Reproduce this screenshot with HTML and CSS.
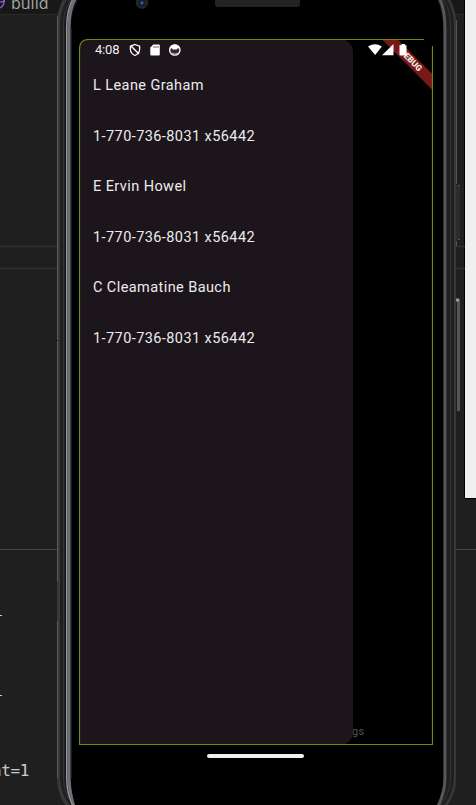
FILE: index.html
```html
<!DOCTYPE html>
<html lang="en">
<head>
<meta charset="utf-8">
<title>Emulator</title>
<link rel="stylesheet" href="styles.css">
</head>
<body>
<div class="desktop">
  <div class="tabbar"></div>
  <span class="tab-label">build</span>
  <span class="dash dash-a"></span>
  <span class="dash dash-b"></span>
  <span class="code">nt=1</span>
  <div class="side-window"></div>
  <svg class="device" width="476" height="805" viewBox="0 0 476 805">
    <path d="M0 246.5H58M0 268.5H58M455 246.5H465M455 268.5H465" stroke="#303030" stroke-width="1.5"/>
    <path d="M0 549.5H58M455 549.5H476" stroke="#464646"/>
    <path d="M0 1.5Q2 3 4.5 0M0 8Q4 6 4.5 0" fill="none" stroke="#8b63c4" stroke-width="1.3"/>
    <rect x="57" y="-22" width="399" height="845" rx="44" fill="#393939"/>
    <rect x="60" y="-20" width="394" height="841" rx="43" fill="#202020"/>
    <rect x="63.5" y="-19" width="387" height="839" rx="42" fill="none" stroke="#343434"/>
    <rect x="65" y="-18" width="382" height="837" rx="42" fill="#151515"/>
    <path d="M82 -12C71 -2 66.7 10 66.7 28V778C66.7 790 69 799 75 810" fill="none" stroke="#94979b" stroke-width="1.5"/>
    <path d="M84 -12C73 -2 69 10 69 28V778C69 790 71.500 799 77.500 810" fill="none" stroke="#6c7077" stroke-width="3.2"/>
    <path d="M433 -12C440 -4 445 9 445 28V778C445 790 442 799 436 810" fill="none" stroke="#56575c" stroke-width="3"/>
    <path d="M75 805Q71 792 71 778V28Q71 12 78 0H437Q443 12 443 28V778Q443 791 437 805Z" fill="#000"/>
    <path d="M71 28V778" stroke="#30373c"/>
    <path d="M57.5 16V581M57.5 621V778" stroke="#5b5b5b"/>
    <path d="M57 340.5H58" stroke="#111"/>
    <path d="M456.5 20V184M456.500 241V246" stroke="#555"/>
    <rect x="456" y="185" width="4" height="55" fill="#2c2c2c"/>
    <path d="M458 185.5H460M458 239.5H460" stroke="#575757"/>
    <rect x="457" y="299" width="3" height="112" fill="#555"/>
    <rect x="456" y="298.5" width="3" height="3" fill="#999"/>
    <circle cx="142" cy="2.7" r="6.2" fill="#252529"/><circle cx="142" cy="3" r="3.9" fill="#171d35"/><circle cx="142" cy="3" r="1.4" fill="#4a5c99"/>
    <rect x="215" y="-8" width="85" height="15" rx="3" fill="#222423"/>
  </svg>
  <main class="screen">
    <span class="settings">gs</span>
    <section class="drawer">
      <header class="status">
        <span class="clock">4:08</span>
        <svg class="status-icons" width="54" height="14" viewBox="0 0 54 14">
          <path d="M6 1.500L10.600 3.200V6.500Q10.400 10.500 6 12.500Q1.600 10.500 1.400 6.500V3.200Z" fill="none" stroke="#fff" stroke-width="1.3"/>
          <path d="M2 3L10 11" stroke="#fff" stroke-width="1.4"/><path d="M6 4L9 5.500V7.500" fill="none" stroke="#1c151c"/>
          <path d="M21.300 4.500L24.300 1.500H29.800Q30.800 1.500 30.800 2.500V11.500Q30.800 12.500 29.800 12.500H22.300Q21.300 12.500 21.300 11.500Z" fill="#fff"/>
          <path d="M25 3V5M27 3V5M29 3V5" stroke="#4b444b" stroke-width=".8"/>
          <circle cx="45.800" cy="7" r="5.2" fill="#302a30" stroke="#fff" stroke-width="1.3"/>
          <path d="M40.800 6.500A5 5 0 0 1 50.800 6.500L48.800 5 47.800 6.500H43.800L42.800 5Z" fill="#fff"/>
          <path d="M43 10Q45.800 12 48.600 10" fill="none" stroke="#aaa"/>
        </svg>
      </header>
      <ul class="contacts">
        <li>L Leane Graham</li>
        <li>1-770-736-8031 x56442</li>
        <li>E Ervin Howel</li>
        <li>1-770-736-8031 x56442</li>
        <li>C Cleamatine Bauch</li>
        <li>1-770-736-8031 x56442</li>
      </ul>
    </section>
    <div class="ribbon">DEBUG</div>
    <svg class="radio" width="42" height="14" viewBox="0 0 42 14">
      <path d="M0 3.500Q7 -1 13.800 3.500L7.200 12Z" fill="#fff"/>
      <path d="M14 12.200L25.500 1V12.200Z" fill="#fff"/>
      <path d="M31.500 2.200H33.500V1H37V2.200H38.500V11.500Q38.500 12.500 37.500 12.500H32.500Q31.500 12.500 31.500 11.500Z" fill="#fff"/>
    </svg>
  </main>
  <svg class="outline" width="354" height="706" viewBox="0 0 354 706">
    <path d="M345 .5H10Q.5 .5 .5 10V705.500H353.500V7" fill="none" stroke="#6e8b0c" stroke-width="1.2"/>
  </svg>
  <div class="nav-handle"></div>
</div>
</body>
</html>
```
FILE: styles.css
```css
body {
  margin: 0;
  overflow: hidden;
}

.desktop {
  position: relative;
  width: 476px;
  height: 805px;
  overflow: hidden;
  background: #1f1f1f;
  font-family: Roboto, sans-serif;
}

.tabbar {
  height: 14px;
  background: #181818;
  border-bottom: 1px solid #292929;
}

.tab-label {
  position: absolute;
  left: 11px;
  top: -8px;
  font: 16px/22px "Open Sans", sans-serif;
  color: #a8a8a8;
}

.dash {
  position: absolute;
  left: 0;
  width: 2px;
  height: 1px;
  background: #ccc;
}

.dash-a {
  top: 615px;
}

.dash-b {
  top: 695px;
}

.code {
  position: absolute;
  left: -8px;
  top: 760px;
  font: 16px/22px "DejaVu Sans Mono", monospace;
  letter-spacing: -0.35px;
  color: #ccc;
}

.side-window {
  position: absolute;
  left: 464px;
  top: 0;
  width: 12px;
  height: 498px;
  background: #f0f0f0;
  border-left: 1px solid #000;
  border-bottom: 1px solid #000;
}

.device {
  position: absolute;
  left: 0;
  top: 0;
}

.screen {
  position: absolute;
  left: 79px;
  top: 39px;
  width: 354px;
  height: 706px;
  overflow: hidden;
  border-radius: 10px 10px 0 0;
  background: #000;
}

.drawer {
  position: relative;
  width: 274px;
  height: 706px;
  border-radius: 10px 13px 13px 0;
  background: #1c151c;
}

.status {
  display: flex;
  align-items: center;
  gap: 9px;
  height: 21px;
  padding-left: 16px;
}

.clock {
  width: 25px;
  font-size: 13px;
  letter-spacing: -0.2px;
  color: #f2f2f2;
}

.contacts {
  margin: 0;
  padding: 0 0 0 14px;
  list-style: none;
  font-size: 14.5px;
  letter-spacing: 0.42px;
  color: #ececec;
}

.contacts li {
  height: 50.5px;
  line-height: 51px;
  white-space: nowrap;
}

.settings {
  position: absolute;
  left: 273px;
  top: 686px;
  font-size: 11px;
  line-height: 14px;
  letter-spacing: 0.3px;
  color: #555;
}

.ribbon {
  position: absolute;
  left: 279px;
  top: 15.5px;
  width: 106px;
  height: 10.5px;
  transform: rotate(45deg);
  background: #791818;
  font-size: 8.5px;
  line-height: 11px;
  font-weight: 900;
  text-align: center;
  color: #f5eaea;
}

.radio {
  position: absolute;
  left: 289px;
  top: 4px;
}

.outline {
  position: absolute;
  left: 79px;
  top: 39px;
}

.nav-handle {
  position: absolute;
  left: 207px;
  top: 754px;
  width: 97px;
  height: 4px;
  border-radius: 2px;
  background: #f0f0f0;
}
```
